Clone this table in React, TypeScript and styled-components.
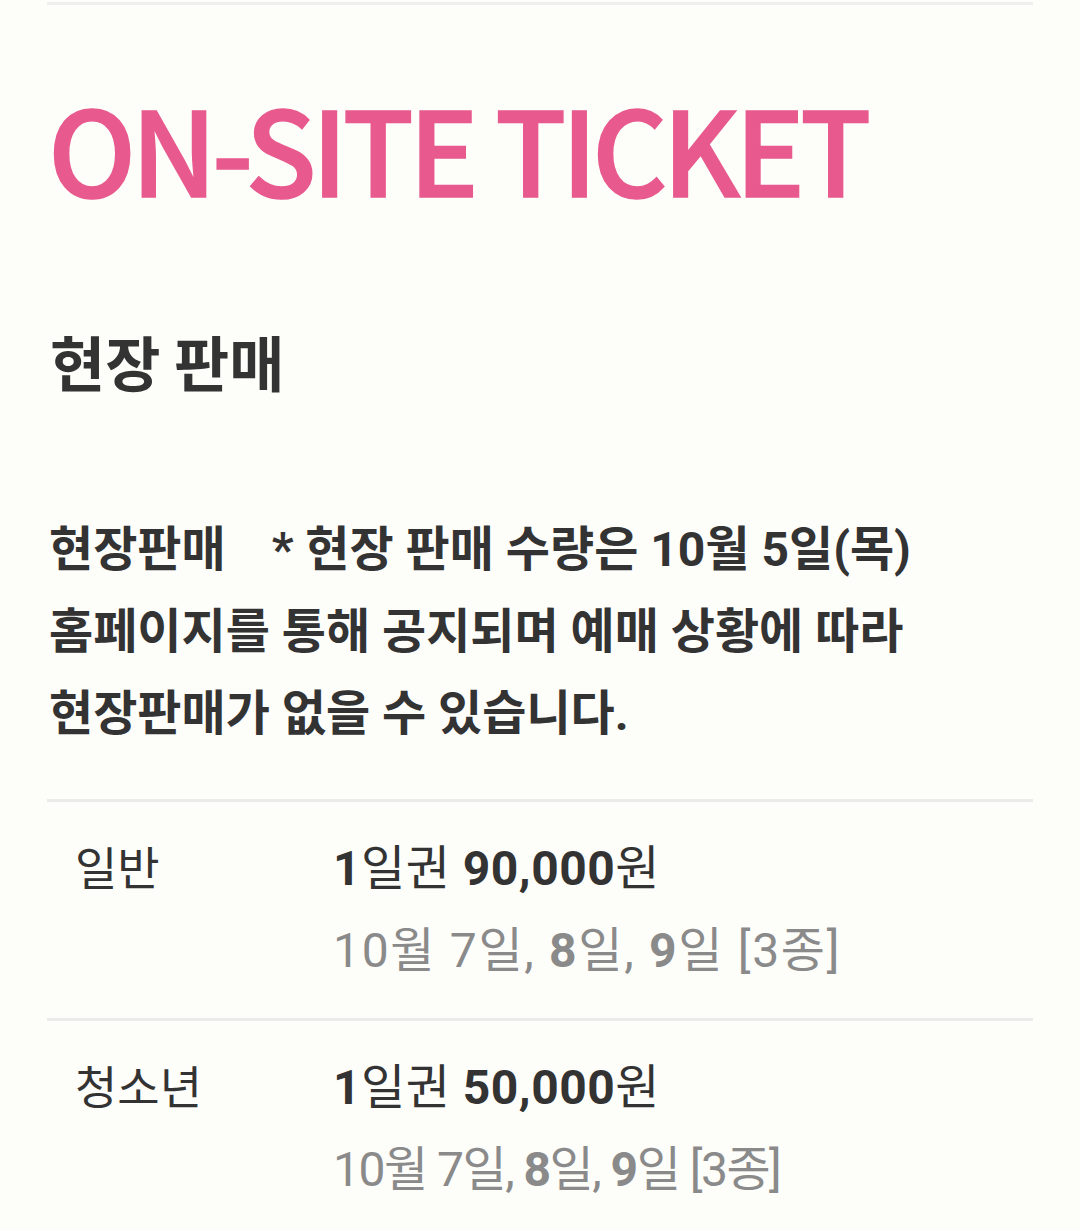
import React from 'react';
import styled, { createGlobalStyle } from 'styled-components';

const GlobalStyle = createGlobalStyle`
  html, body {
    margin: 0;
    padding: 0;
    background: #fdfdfa;
  }
  body {
    font-family: Roboto, "Noto Sans CJK KR", sans-serif;
    color: #333333;
  }
`;

type Ticket = {
  label: string;
  price: string;
  narrow?: boolean;
};

const tickets: Ticket[] = [
  { label: '일반', price: '90,000' },
  { label: '청소년', price: '50,000', narrow: true }
];

function App() {
  return (
    <Page>
      <GlobalStyle />
      <TopLine />
      <Title>ON-SITE TICKET</Title>
      <Heading>현장 판매</Heading>
      <Notice>
        <NoticeLabel>현장판매</NoticeLabel>* 현장 판매 수량은 10월 5일(목)
        <br />
        홈페이지를 통해 공지되며 예매 상황에 따라
        <br />
        현장판매가 없을 수 있습니다.
      </Notice>
      <PriceTable>
        {tickets.map((t) => (
          <PriceRow key={t.label}>
            <RowLabel>{t.label}</RowLabel>
            <RowValue>
              <PriceLine>
                <b>1</b>일권 <b>{t.price}</b>원
              </PriceLine>
              <DateLine narrow={t.narrow}>
                10월 7일, <b>8</b>일, <b>9</b>일 [3종]
              </DateLine>
            </RowValue>
          </PriceRow>
        ))}
      </PriceTable>
    </Page>
  );
}

export default App;

const Page = styled.div`
  width: 986px;
  margin-left: 47px;
  min-height: 1230px;
`;

const TopLine = styled.div`
  height: 3px;
  margin-top: 2px;
  background: #efefed;
`;

const Title = styled.h1`
  margin: 0;
  padding: 71px 0 0 1px;
  font-family: "Noto Sans CJK KR", sans-serif;
  font-weight: 500;
  font-size: 117px;
  line-height: 140px;
  color: #e85a8e;
  letter-spacing: -5.2px;
  -webkit-text-stroke: 1.5px #e85a8e;
`;

const Heading = styled.h2`
  margin: 0;
  padding: 105px 0 0 3px;
  font-family: "Noto Sans CJK KR", sans-serif;
  font-weight: 700;
  font-size: 60px;
  line-height: 80px;
  color: #333333;
`;

const Notice = styled.p`
  margin: 0;
  padding: 108px 0 0 2px;
  font-weight: 700;
  font-size: 48px;
  line-height: 82px;
  color: #333333;
`;

const NoticeLabel = styled.span`
  margin-right: 46px;
`;

const PriceTable = styled.div`
  margin-top: 44px;
  border-top: 3px solid #ebebe9;
`;

const PriceRow = styled.div`
  display: flex;
  padding: 26px 0 26px 28px;
  & + & {
    border-top: 3px solid #ebebe9;
  }
`;

const RowLabel = styled.div`
  width: 258px;
  flex-shrink: 0;
  font-size: 46px;
  line-height: 82px;
  color: #333333;
`;

const RowValue = styled.div`
  display: flex;
  flex-direction: column;
`;

const PriceLine = styled.div`
  font-size: 48px;
  line-height: 82px;
  letter-spacing: 0.5px;
  color: #333333;
  b {
    font-weight: 700;
  }
`;

const DateLine = styled.div<{ narrow?: boolean }>`
  font-size: 48px;
  line-height: 82px;
  color: #8a8a8a;
  letter-spacing: ${(p) => (p.narrow ? '-1.5px' : '1.7px')};
  b {
    font-weight: 700;
  }
`;
